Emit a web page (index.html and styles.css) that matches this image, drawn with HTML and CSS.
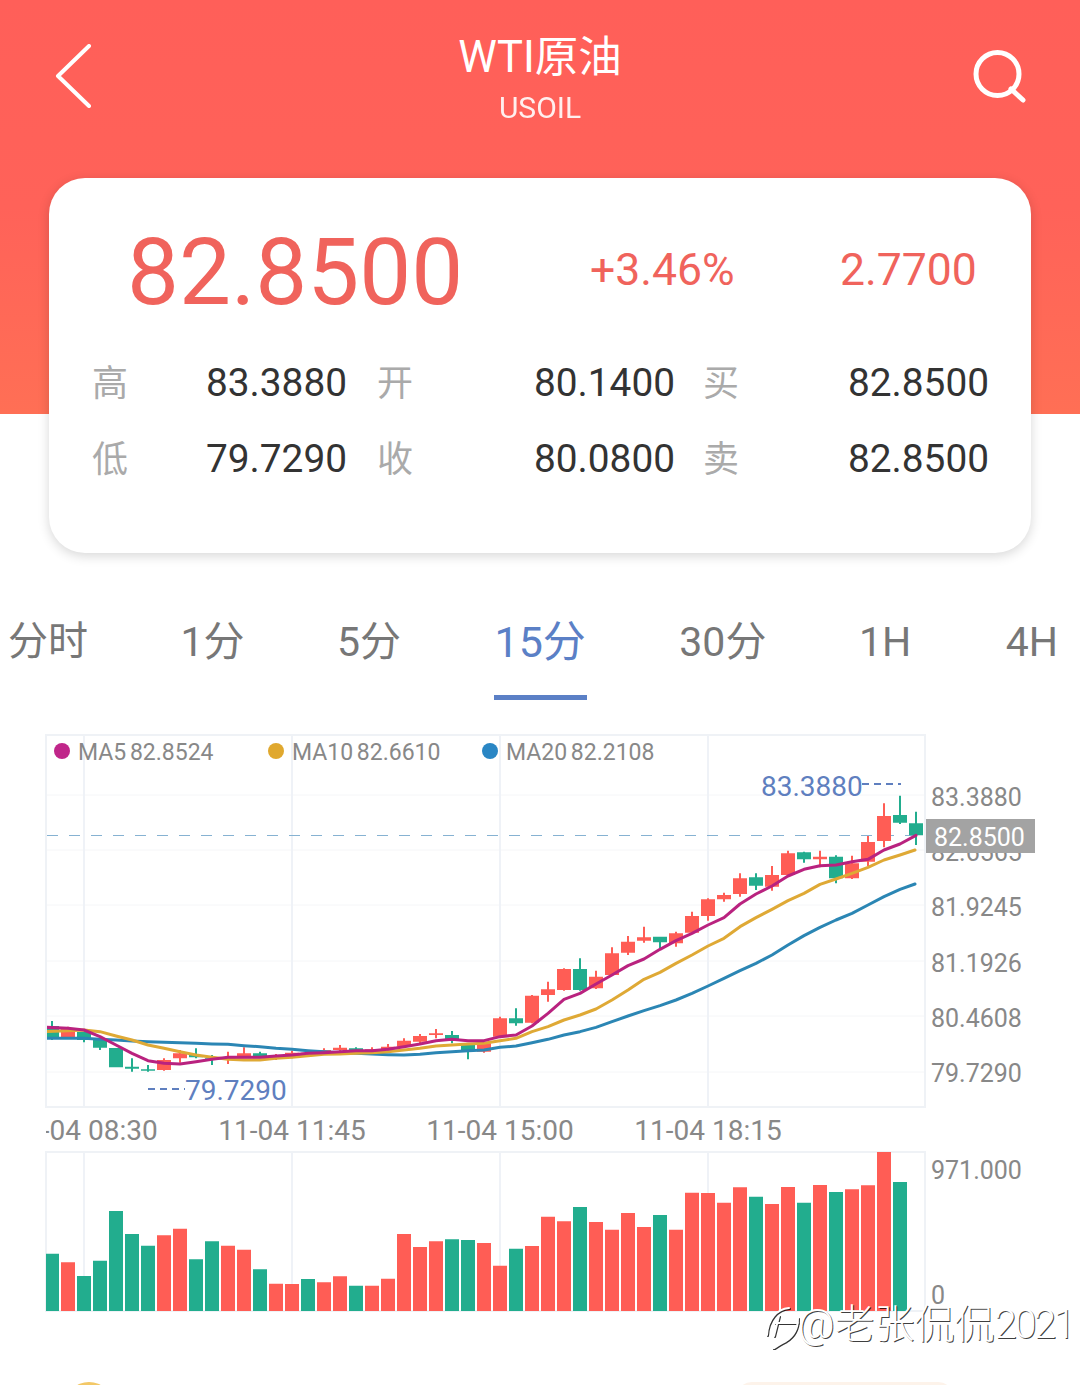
FILE: index.html
```html
<!DOCTYPE html>
<html lang="zh">
<head>
<meta charset="utf-8">
<title>WTI原油</title>
<link rel="stylesheet" href="styles.css">
</head>
<body>
<div class="page">
  <header class="nav">
    <svg class="nav-icon" width="56" height="64" viewBox="0 0 56 64"><path class="nav-stroke" d="M35 2 4 32l31 30"/></svg>
    <div class="title">
      <div class="title-main">WTI原油</div>
      <div class="title-sub">USOIL</div>
    </div>
    <svg class="nav-icon" width="56" height="56" viewBox="0 0 56 56"><circle class="nav-stroke thick" cx="27.5" cy="27" r="21.5"/><path class="nav-stroke thick" d="M41 42l12 11"/></svg>
  </header>

  <section class="card">
    <div class="quote">
      <span class="price">82.8500</span>
      <span class="change">+3.46%</span>
      <span class="change">2.7700</span>
    </div>
    <div class="stats">
      <span class="lbl">高</span><span class="val">83.3880</span>
      <span class="lbl">开</span><span class="val">80.1400</span>
      <span class="lbl">买</span><span class="val">82.8500</span>
      <span class="lbl">低</span><span class="val">79.7290</span>
      <span class="lbl">收</span><span class="val">80.0800</span>
      <span class="lbl">卖</span><span class="val">82.8500</span>
    </div>
  </section>

  <nav class="tabs">
    <span class="tab">分时</span>
    <span class="tab">1分</span>
    <span class="tab">5分</span>
    <span class="tab active">15分</span>
    <span class="tab">30分</span>
    <span class="tab">1H</span>
    <span class="tab">4H</span>
  </nav>

  <svg class="chart" width="1080" height="652" viewBox="0 730 1080 652">
    <defs>
      <clipPath id="plot"><rect x="47" y="736" width="877" height="370"/></clipPath>
      <clipPath id="axis"><rect x="46" y="1110" width="800" height="40"/></clipPath>
    </defs>

    <g class="grid-h">
      <path d="M47 795H924M47 850H924M47 905H924M47 961H924M47 1016H924M47 1072H924M47 1311H924"/>
    </g>
    <rect class="frame" x="46" y="735" width="879" height="372"/>
    <rect class="frame" x="46" y="1152" width="879" height="159"/>
    <path class="grid-v" d="M84 736V1106M292 736V1106M500 736V1106M708 736V1106M84 1153V1310M292 1153V1310M500 1153V1310M708 1153V1310"/>
    <path class="last-line" d="M47 835.5H924"/>

    <g class="legend">
      <circle class="dot-5" cx="62" cy="751" r="8"/>
      <text x="78" y="760">MA5 82.8524</text>
      <circle class="dot-10" cx="276" cy="751" r="8"/>
      <text x="292" y="760">MA10 82.6610</text>
      <circle class="dot-20" cx="490" cy="751" r="8"/>
      <text x="506" y="760">MA20 82.2108</text>
    </g>

    <g clip-path="url(#plot)">
      <g transform="translate(0 730) scale(1 .33333)">
        <path class="up" d="M61 897h14v25h-14zM67 890h2v35h-2zM157 990h14v30h-14zM163 985h2v37h-2zM173 970h14v15h-14zM179 960h2v38h-2zM221 982h14v6h-14zM227 965h2v37h-2zM237 970h14v15h-14zM243 952h2v33h-2zM269 975h14v10h-14zM275 972h2v18h-2zM285 968h14v12h-14zM291 962h2v23h-2zM301 968h14v4h-14zM307 965h2v10h-2zM317 960h14v12h-14zM323 955h2v20h-2zM333 953h14v7h-14zM339 945h2v23h-2zM365 958h14v7h-14zM371 952h2v16h-2zM381 950h14v8h-14zM387 942h2v20h-2zM397 932h14v18h-14zM403 925h2v27h-2zM413 918h14v17h-14zM419 912h2v28h-2zM429 910h14v5h-14zM435 897h2v28h-2zM477 940h14v25h-14zM483 938h2v30h-2zM493 865h14v55h-14zM499 860h2v62h-2zM525 797h14v81h-14zM531 795h2v85h-2zM541 778h14v17h-14zM547 755h2v60h-2zM557 717h14v63h-14zM563 715h2v67h-2zM589 740h14v35h-14zM595 722h2v55h-2zM605 670h14v65h-14zM611 652h2v85h-2zM621 635h14v33h-14zM627 618h2v57h-2zM637 622h14v10h-14zM643 590h2v48h-2zM669 610h14v30h-14zM675 605h2v45h-2zM685 558h14v50h-14zM691 545h2v65h-2zM701 508h14v50h-14zM707 505h2v67h-2zM717 495h14v13h-14zM723 488h2v27h-2zM733 445h14v47h-14zM739 430h2v70h-2zM765 435h14v35h-14zM771 408h2v74h-2zM781 370h14v65h-14zM787 362h2v75h-2zM813 380h14v8h-14zM819 362h2v50h-2zM845 400h14v45h-14zM851 377h2v70h-2zM861 336h14v59h-14zM867 318h2v90h-2zM877 258h14v75h-14zM883 220h2v132h-2z"/>
        <path class="down" d="M47 888h12v37h-12zM51 873h2v57h-2zM77 905h14v25h-14zM83 905h2v32h-2zM93 925h14v28h-14zM99 925h2v35h-2zM109 954h14v58h-14zM125 1010h14v6h-14zM131 985h2v40h-2zM141 1018h14v4h-14zM147 1005h2v20h-2zM189 975h14v7h-14zM195 955h2v30h-2zM205 985h14v5h-14zM211 975h2v30h-2zM253 970h14v15h-14zM259 965h2v20h-2zM349 955h14v10h-14zM355 952h2v16h-2zM445 915h14v13h-14zM451 903h2v37h-2zM461 945h14v18h-14zM467 945h2v43h-2zM509 865h14v15h-14zM515 835h2v52h-2zM573 717h14v63h-14zM579 685h2v97h-2zM653 620h14v17h-14zM659 620h2v35h-2zM749 442h14v25h-14zM755 430h2v50h-2zM797 367h14v21h-14zM803 365h2v33h-2zM829 380h14v65h-14zM835 376h2v84h-2zM893 255h14v23h-14zM899 197h2v85h-2zM909 280h14v36h-14zM915 245h2v100h-2z"/>
        <polyline class="ma ma20" points="46,925 68,925 84,925 100,928 116,930 132,933 148,935 164,937 180,938 196,940 212,942 228,943 244,947 260,950 276,955 292,958 308,962 324,965 340,968 356,970 372,972 388,974 404,975 420,973 436,968 452,965 468,962 484,960 500,952 516,948 532,938 548,928 564,915 580,905 596,892 612,875 628,858 644,842 660,827 676,810 692,790 708,768 724,745 740,722 756,700 772,675 788,645 804,617 820,592 836,570 852,550 868,525 884,500 900,478 915,462"/>
        <polyline class="ma ma10" points="46,905 68,902 84,900 100,905 116,918 132,930 148,945 164,955 180,965 196,975 212,982 228,988 244,990 260,990 276,985 292,982 308,977 324,973 340,972 356,970 372,968 388,965 404,960 420,955 436,948 452,945 468,942 484,940 500,932 516,925 532,905 548,890 564,870 580,855 596,837 612,810 628,780 644,748 660,727 676,700 692,675 708,648 724,625 740,590 756,563 772,538 788,512 804,490 820,463 836,447 852,430 868,412 884,390 900,375 915,360"/>
        <polyline class="ma ma5" points="46,892 68,895 84,900 100,920 116,945 132,970 148,992 164,1000 180,1002 196,995 212,988 228,982 244,982 260,982 276,978 292,975 308,970 324,968 340,965 356,962 372,962 388,958 404,950 420,942 436,932 452,928 468,932 484,932 500,920 516,915 532,888 548,850 564,808 580,790 596,762 612,735 628,707 644,687 660,658 676,632 692,610 708,585 724,563 740,522 756,492 772,468 788,438 804,418 820,407 836,405 852,395 868,388 884,360 900,342 916,316"/>
      </g>
    </g>

    <g class="extreme">
      <text x="761" y="796">83.3880</text>
      <path class="extreme-line" d="M862 784H901"/>
      <text x="185" y="1100">79.7290</text>
      <path class="extreme-line" d="M148 1089H185"/>
    </g>

    <g class="axis">
      <text x="931" y="806">83.3880</text>
      <text x="931" y="861">82.6565</text>
      <text x="931" y="916">81.9245</text>
      <text x="931" y="972">81.1926</text>
      <text x="931" y="1027">80.4608</text>
      <text x="931" y="1082">79.7290</text>
      <text x="931" y="1179">971.000</text>
      <text x="931" y="1304">0</text>
    </g>

    <rect class="tag" x="926" y="819" width="109" height="34"/>
    <text class="tag-text" x="934" y="846">82.8500</text>

    <g class="times" clip-path="url(#axis)">
      <text x="84" y="1140">11-04 08:30</text>
      <text x="292" y="1140">11-04 11:45</text>
      <text x="500" y="1140">11-04 15:00</text>
      <text x="708" y="1140">11-04 18:15</text>
    </g>

    <g transform="translate(0 1110) scale(1 .33333)">
      <path class="up" d="M61 457h14V603h-14zM157 376h14V603h-14zM173 356h14V603h-14zM221 407h14V603h-14zM237 419h14V603h-14zM269 521h14V603h-14zM285 522h14V603h-14zM317 517h14V603h-14zM333 499h14V603h-14zM365 527h14V603h-14zM381 506h14V603h-14zM397 372h14V603h-14zM413 411h14V603h-14zM429 394h14V603h-14zM477 399h14V603h-14zM493 467h14V603h-14zM525 408h14V603h-14zM541 320h14V603h-14zM557 334h14V603h-14zM589 336h14V603h-14zM605 359h14V603h-14zM621 309h14V603h-14zM637 351h14V603h-14zM669 359h14V603h-14zM685 248h14V603h-14zM701 249h14V603h-14zM717 278h14V603h-14zM733 232h14V603h-14zM765 282h14V603h-14zM781 231h14V603h-14zM813 225h14V603h-14zM845 238h14V603h-14zM861 226h14V603h-14zM877 126h14V603h-14z"/>
      <path class="down" d="M46 431h13V603h-13zM77 498h14V603h-14zM93 452h14V603h-14zM109 303h14V603h-14zM125 372h14V603h-14zM141 407h14V603h-14zM189 448h14V603h-14zM205 394h14V603h-14zM253 478h14V603h-14zM301 507h14V603h-14zM349 527h14V603h-14zM445 388h14V603h-14zM461 390h14V603h-14zM509 416h14V603h-14zM573 291h14V603h-14zM653 315h14V603h-14zM749 260h14V603h-14zM797 278h14V603h-14zM829 246h14V603h-14zM893 216h14V603h-14z"/>
    </g>
  </svg>

  <div class="peek">
    <span class="peek-coin"></span>
    <span class="peek-pill"></span>
  </div>

  <div class="watermark">
    <svg class="wm-logo" width="36" height="44" viewBox="0 0 36 44"><path d="M24 3C12 4 3 14 2 30M10 18H33M14 11 9 31M33 13C33 24 29 31 21 36 15 39 11 41 8 44"/></svg>
    <span class="wm-text">@老张侃侃<span class="wm-num">2021</span></span>
  </div>
</div>
</body>
</html>
```

FILE: styles.css
```css
* { box-sizing: border-box; }
html, body { margin: 0; padding: 0; background: #fff; }
body { height: 1385px; overflow: hidden; }

.page {
  position: relative;
  width: 1080px;
  height: 1385px;
  overflow: hidden;
  font-family: Roboto, "Noto Sans CJK SC", sans-serif;
  background: linear-gradient(180deg, #ff5f59 0%, #ff6259 50%, #ff6f55 100%) top / 100% 414px no-repeat;
}

.nav {
  height: 178px;
  padding: 44px 54px 0 54px;
  display: flex;
  justify-content: space-between;
  align-items: flex-start;
}
.nav-icon { display: block; margin-top: 0; }
.nav-icon:last-child { margin: 3px 0 0 0; }
.nav-stroke { fill: none; stroke: #fff; stroke-width: 4; stroke-linecap: round; stroke-linejoin: round; }
.thick { stroke-width: 5; }

.title { text-align: center; color: #fff; margin-top: -12px; }
.title-main { font-size: 43.5px; line-height: 52px; }
.title-sub { font-size: 30px; line-height: 36px; margin-top: 6px; opacity: .9; }

.card {
  width: 982px;
  height: 375px;
  margin-left: 49px;
  padding: 42px 0 0 43px;
  background: #fff;
  border-radius: 36px;
  box-shadow: 0 3px 12px rgba(0, 0, 0, .16);
}
.quote { display: flex; align-items: center; height: 100px; margin-bottom: 24px; padding-left: 35px; color: #f0635c; }
.price { font-size: 92.5px; line-height: 100px; width: 463px; flex: none; margin-top: 6px; }
.change { font-size: 44.5px; line-height: 100px; width: 250px; flex: none; }

.stats {
  display: grid;
  grid-template-columns: 35px 220px 66px 262px 64px 250px;
  grid-auto-rows: 76px;
  align-items: center;
  text-align: right;
}
.lbl { font-size: 36px; color: #aaa; margin-top: -5px; }
.val { font-size: 38.8px; color: #333; }

.tabs {
  margin-top: 67px;
  padding: 0 22px 0 8px;
  display: flex;
  justify-content: space-between;
  align-items: flex-start;
}
.tab {
  font-size: 41px;
  line-height: 44px;
  padding-bottom: 31px;
  border-bottom: 5px solid transparent;
  color: #777;
}
.tab:first-child { font-size: 40px; }
.tab:last-child { margin-left: 2px; }
.tab.active { font-size: 43px; padding: 0 1px 31px; color: #5b80c6; border-bottom-color: #5b80c6; }

.chart { display: block; margin-top: 30px; }
.frame { fill: none; stroke: #eff2f6; stroke-width: 2; }
.grid-h path { fill: none; stroke: #f5f6f8; stroke-width: 1; }
.grid-v { fill: none; stroke: #eff2f7; stroke-width: 2; }
.last-line { fill: none; stroke: #86b2d2; stroke-width: 1; stroke-dasharray: 11 11; }

.legend text { font-size: 23px; fill: #888; word-spacing: -2px; }
.dot-5 { fill: #c0268a; }
.dot-10 { fill: #e0a82e; }
.dot-20 { fill: #2a86c4; }

.up { fill: #ff5d55; }
.down { fill: #22ad8e; }
.ma { fill: none; stroke-width: 3; stroke-linejoin: round; stroke-linecap: round; vector-effect: non-scaling-stroke; }
.ma5 { stroke: #b9227f; }
.ma10 { stroke: #dfa935; }
.ma20 { stroke: #2b86b4; }

.extreme text { font-size: 28px; fill: #5f7fbf; }
.extreme-line { fill: none; stroke: #5f7fbf; stroke-width: 2; stroke-dasharray: 7 5; }

.axis text { font-size: 25px; fill: #888; }
.tag { fill: #a3a3a3; }
.tag-text { font-size: 25px; fill: #fff; }
.times text { font-size: 28px; fill: #888; text-anchor: middle; }

.peek { height: 48px; position: relative; display: flex; padding-left: 65px; gap: 623px; }
.peek-coin { width: 48px; height: 48px; border-radius: 50%; background: #f3c867; flex: none; }
.peek-pill { width: 218px; height: 48px; border-radius: 16px; background: #fdf3ea; flex: none; }

.watermark {
  position: absolute;
  left: 765px;
  top: 1305px;
  display: flex;
  align-items: flex-start;
}
.wm-logo { display: block; flex: none; filter: drop-shadow(1px 1px 0 rgba(0, 0, 0, .8)); }
.wm-logo path { fill: none; stroke: #fff; stroke-width: 2; stroke-linecap: round; }
.wm-text {
  margin-left: -3px;
  font-size: 40px;
  line-height: 40px;
  font-weight: 300;
  white-space: nowrap;
  color: #fff;
  text-shadow: 1px 1px 0 rgba(0, 0, 0, .75);
}
.wm-num { letter-spacing: -2.5px; }
```
